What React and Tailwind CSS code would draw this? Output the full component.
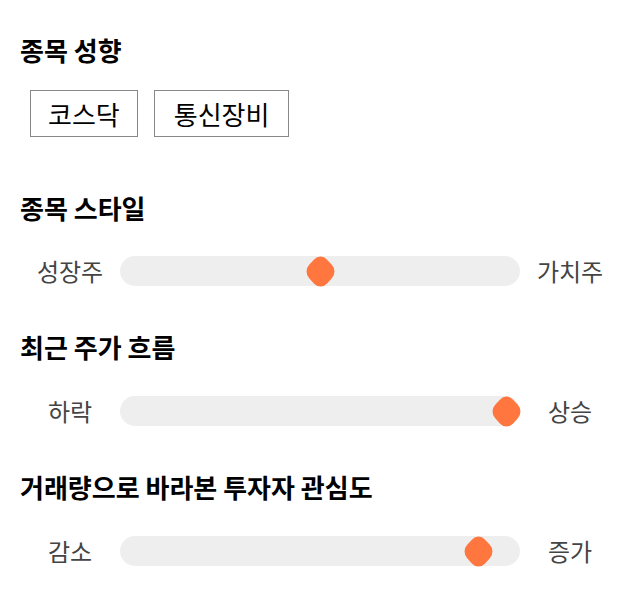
import React from 'react';

const font = { fontFamily: '"Noto Sans CJK KR", "Noto Sans", sans-serif' };

function Slider({ left, right, value }) {
  // 썸 위치: 트랙 400px, 썸 28px
  const pos = 14 + 372 * value;
  return (
    <div className="flex items-center h-[30px]">
      <div className="w-[100px] text-center text-[24px] leading-[30px] text-[#444]">{left}</div>
      <div className="relative w-[400px] h-[30px] rounded-full bg-[#eeeeee]">
        <div
          className="absolute top-0 w-[28px] h-[30px] -ml-[14px] flex items-center justify-center scale-y-[1.07]"
          style={{ left: pos }}
        >
          <div className="shrink-0 w-[25px] h-[25px] rounded-[9px] bg-[#ff763e] rotate-45" />
        </div>
      </div>
      <div className="w-[100px] text-center text-[24px] leading-[30px] text-[#444]">{right}</div>
    </div>
  );
}

export default function App() {
  return (
    <div className="w-[640px] h-[606px] bg-white px-5 pt-[36px]" style={font}>
      <h3 className="text-[26px] leading-[28px] font-bold text-black">종목 성향</h3>
      <div className="flex gap-4 mt-[26px] ml-[10px]">
        <div className="h-[47px] px-[17px] border border-[#888] flex items-center text-[26px] text-black">코스닥</div>
        <div className="h-[47px] px-[19px] border border-[#888] flex items-center text-[26px] text-black">통신장비</div>
      </div>

      <h3 className="mt-[57px] text-[26px] leading-[28px] font-bold text-black">종목 스타일</h3>
      <div className="mt-[34px]">
        <Slider left="성장주" right="가치주" value={0.5} />
      </div>

      <h3 className="mt-[47px] text-[26px] leading-[28px] font-bold text-black">최근 주가 흐름</h3>
      <div className="mt-[35px]">
        <Slider left="하락" right="상승" value={1} />
      </div>

      <h3 className="mt-[47px] text-[26px] leading-[28px] font-bold text-black">거래량으로 바라본 투자자 관심도</h3>
      <div className="mt-[35px]">
        <Slider left="감소" right="증가" value={0.925} />
      </div>
    </div>
  );
}
